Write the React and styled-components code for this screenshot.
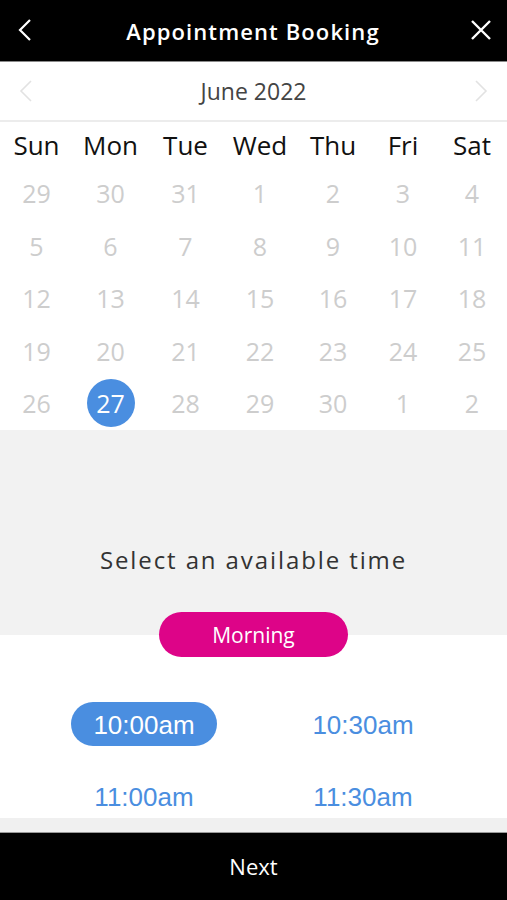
import React, { useState } from "react";
import styled, { createGlobalStyle } from "styled-components";

const GlobalStyle = createGlobalStyle`
  body {
    margin: 0;
    font-family: "Open Sans", "Liberation Sans", sans-serif;
    background: #ffffff;
  }
`;

const weekdays = ["Sun", "Mon", "Tue", "Wed", "Thu", "Fri", "Sat"];
const days = [
  29, 30, 31, 1, 2, 3, 4,
  5, 6, 7, 8, 9, 10, 11,
  12, 13, 14, 15, 16, 17, 18,
  19, 20, 21, 22, 23, 24, 25,
  26, 27, 28, 29, 30, 1, 2,
];
const times = ["10:00am", "10:30am", "11:00am", "11:30am"];

export default function App() {
  const [day, setDay] = useState(29);
  const [time, setTime] = useState("10:00am");

  return (
    <Page>
      <GlobalStyle />
      <Header>
        <IconButton aria-label="back">
          <svg width="14" height="22" viewBox="0 0 14 22">
            <path d="M12 1 L2 11 L12 21" fill="none" stroke="#fff" strokeWidth="2.2" />
          </svg>
        </IconButton>
        <Title>Appointment Booking</Title>
        <IconButton aria-label="close">
          <svg width="20" height="20" viewBox="0 0 20 20">
            <path d="M1 1 L19 19 M19 1 L1 19" fill="none" stroke="#fff" strokeWidth="2.4" />
          </svg>
        </IconButton>
      </Header>

      <MonthBar>
        <Arrow>
          <svg width="14" height="22" viewBox="0 0 14 22">
            <path d="M12 1 L2 11 L12 21" fill="none" stroke="#e2e2e2" strokeWidth="1.6" />
          </svg>
        </Arrow>
        <Month>June 2022</Month>
        <Arrow>
          <svg width="14" height="22" viewBox="0 0 14 22">
            <path d="M2 1 L12 11 L2 21" fill="none" stroke="#e2e2e2" strokeWidth="1.6" />
          </svg>
        </Arrow>
      </MonthBar>

      <Grid>
        {weekdays.map((w) => (
          <Weekday key={w}>{w}</Weekday>
        ))}
        {days.map((d, i) => (
          <DayCell key={i} onClick={() => setDay(i)}>
            <DayNum $selected={i === day}>{d}</DayNum>
          </DayCell>
        ))}
      </Grid>

      <Prompt>
        <PromptText>Select an available time</PromptText>
      </Prompt>

      <Slots>
        <Period>Morning</Period>
        <SlotGrid>
          {times.map((t) => (
            <Slot key={t} $active={t === time} onClick={() => setTime(t)}>
              {t}
            </Slot>
          ))}
        </SlotGrid>
      </Slots>

      <Spacer />
      <Footer>Next</Footer>
    </Page>
  );
}

const Page = styled.div`
  width: 507px;
  height: 900px;
  display: flex;
  flex-direction: column;
  overflow: hidden;
`;

const Header = styled.header`
  flex: none;
  height: 62px;
  box-sizing: border-box;
  background: #000;
  border-bottom: 1px solid #8a8a8a;
  display: flex;
  align-items: center;
  justify-content: space-between;
  padding: 0 15px 0 14px;
`;

const IconButton = styled.button`
  background: none;
  border: none;
  padding: 0;
  width: 22px;
  height: 24px;
  display: flex;
  align-items: center;
  justify-content: center;
  margin-top: -1px;
`;

const Title = styled.h1`
  margin: 0;
  color: #fff;
  font-family: "Open Sans", sans-serif;
  font-weight: 600;
  font-size: 22px;
  letter-spacing: 1.1px;
`;

const MonthBar = styled.div`
  flex: none;
  height: 58px;
  display: flex;
  align-items: center;
  justify-content: space-between;
  padding: 0 19px;
  border-bottom: 2px solid #ececec;
`;

const Arrow = styled.span`
  display: flex;
  width: 14px;
`;

const Month = styled.div`
  font-size: 23px;
  color: #444;
`;

const Grid = styled.div`
  flex: none;
  display: grid;
  grid-template-columns: 73px 75px 75px 74px 72px 68px 70px;
  grid-template-rows: 45px repeat(5, 52.5px);
  background: #fff;
`;

const Weekday = styled.div`
  display: flex;
  align-items: center;
  justify-content: center;
  font-size: 26px;
  color: #111;
`;

const DayCell = styled.div`
  display: flex;
  align-items: center;
  justify-content: center;
`;

const DayNum = styled.span`
  width: 48px;
  height: 48px;
  border-radius: 50%;
  display: flex;
  align-items: center;
  justify-content: center;
  font-size: 25px;
  color: ${(p) => (p.$selected ? "#fff" : "#cdcdcd")};
  background: ${(p) => (p.$selected ? "#4a8ee0" : "transparent")};
`;

const Prompt = styled.div`
  flex: none;
  background: #f2f2f2;
  height: 205px;
  display: flex;
  align-items: flex-end;
  justify-content: center;
`;

const PromptText = styled.div`
  font-size: 24px;
  color: #333;
  letter-spacing: 1.9px;
  margin-bottom: 59px;
`;

const Slots = styled.div`
  flex: none;
  background: #fff;
  height: 183px;
  display: flex;
  flex-direction: column;
  align-items: center;
`;

const Period = styled.div`
  width: 189px;
  height: 46px;
  margin-top: -23px;
  border-radius: 23px;
  background: #dd0488;
  color: #fff;
  font-size: 21px;
  display: flex;
  align-items: center;
  justify-content: center;
  padding-top: 1px;
  box-sizing: border-box;
`;

const SlotGrid = styled.div`
  display: grid;
  grid-template-columns: 146px 146px;
  column-gap: 73px;
  row-gap: 28px;
  margin-top: 45px;
`;

const Slot = styled.button`
  height: 44px;
  border: none;
  border-radius: 22px;
  font-family: "Liberation Sans", Arial, sans-serif;
  font-size: 26px;
  background: ${(p) => (p.$active ? "#4a8ee0" : "transparent")};
  color: ${(p) => (p.$active ? "#fff" : "#4a8ee0")};
  padding: 3px 0 0;
`;

const Spacer = styled.div`
  flex: none;
  height: 14px;
  background: #f0f0f0;
  border-bottom: 1px solid #9a9a9a;
`;

const Footer = styled.div`
  flex: 1;
  background: #000;
  color: #fff;
  font-size: 22px;
  display: flex;
  align-items: center;
  justify-content: center;
`;
